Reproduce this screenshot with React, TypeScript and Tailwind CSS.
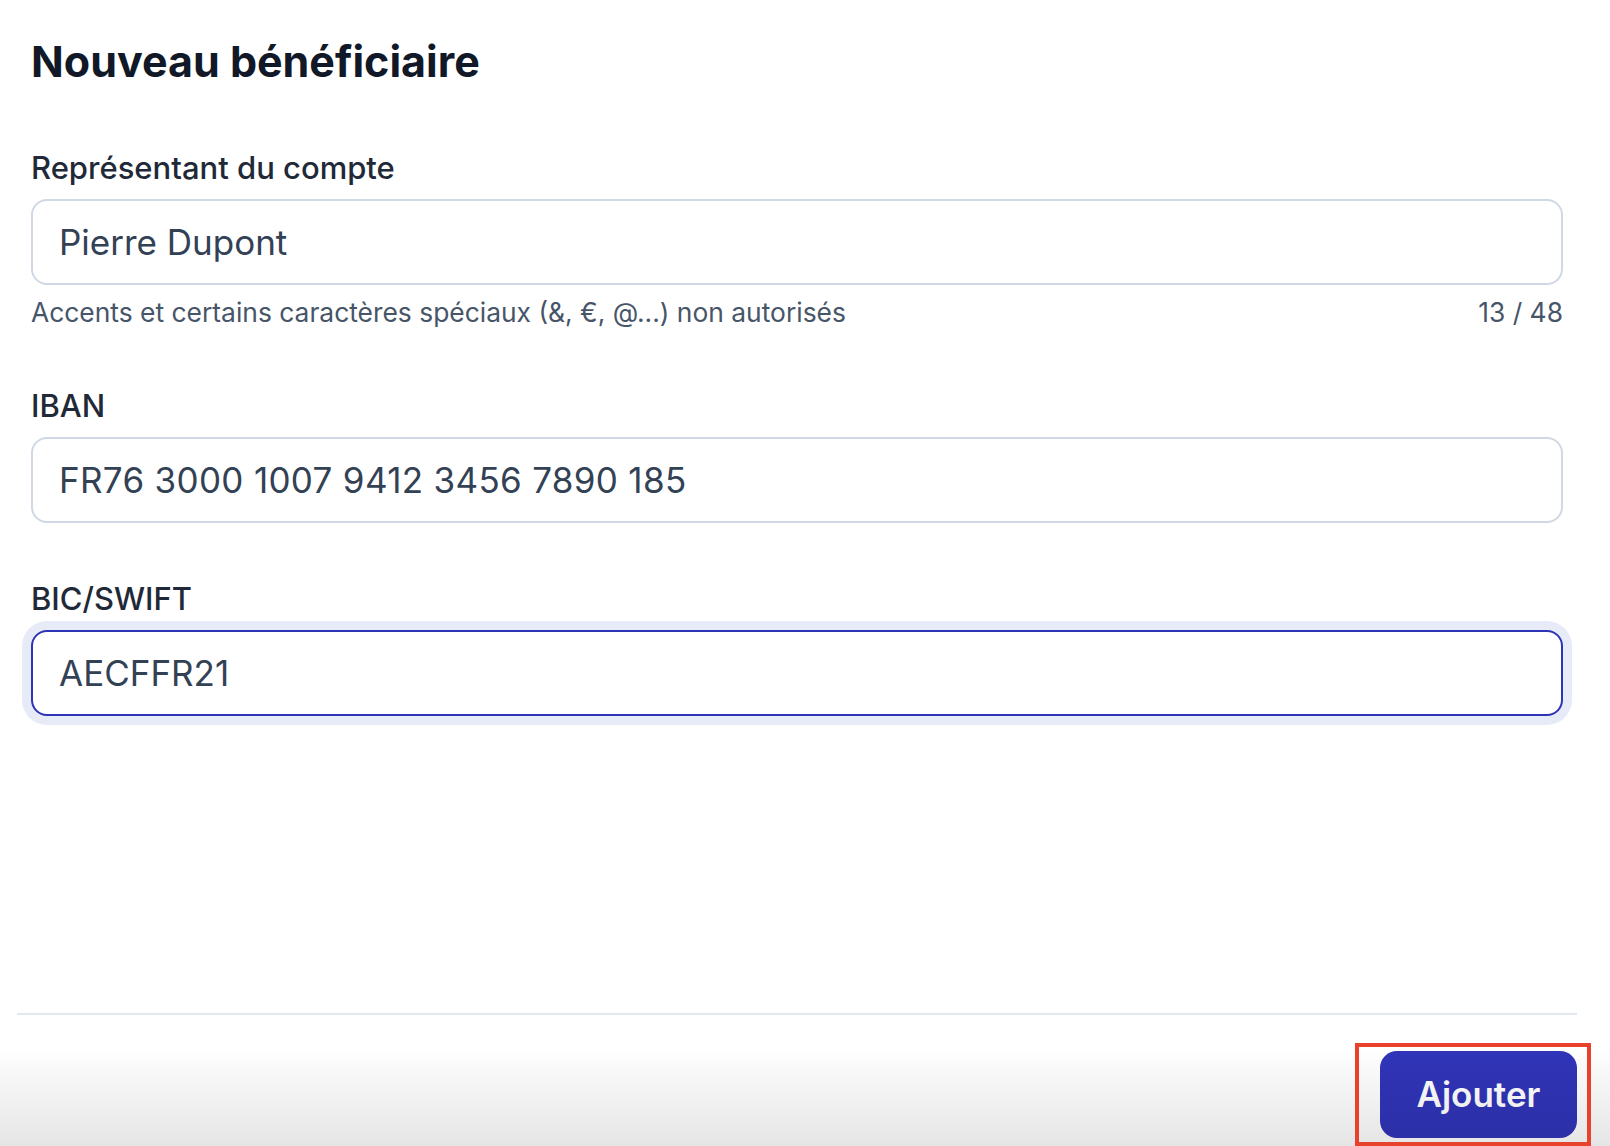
import React from "react";

function Field({
  label,
  value,
  focused = false,
  numeric = false,
}: {
  label: string;
  value: string;
  focused?: boolean;
  numeric?: boolean;
}) {
  return (
    <div className="flex flex-col">
      <label className="text-[31px] leading-[44px] font-medium text-[#1f2937]">{label}</label>
      <div className="mt-[9px]">
        <div
          className={
            focused
              ? "h-[86px] rounded-[16px] border-2 border-[#2f33b5] bg-white pl-[26px] flex items-center shadow-[0_0_0_9px_#e6ebf7]"
              : "h-[86px] rounded-[16px] border-2 border-[#cfd8e3] bg-white pl-[26px] flex items-center"
          }
        >
          <span className={numeric ? "text-[35px] text-[#334155] tracking-[0.32px]" : "text-[35px] text-[#334155]"}>
            {value}
          </span>
        </div>
      </div>
    </div>
  );
}

export default function App() {
  return (
    <div
      className="relative w-[1610px] h-[1146px] bg-white overflow-hidden"
      style={{ fontFamily: "Inter, 'Noto Sans', sans-serif" }}
    >
      <div className="flex flex-col h-full pl-[17px] pr-[33px]">
        <div className="flex-1 px-[14px]">
          <h1 className="pt-[35px] text-[43px] leading-[53px] font-bold text-[#111827]">
            Nouveau bénéficiaire
          </h1>

          <div className="mt-[58px]">
            <Field label="Représentant du compte" value="Pierre Dupont" />
            <div className="mt-[9px] flex justify-between text-[26.4px] leading-[36px] text-[#475569]">
              <span>Accents et certains caractères spéciaux (&amp;, €, @...) non autorisés</span>
              <span>13 / 48</span>
            </div>
          </div>

          <div className="mt-[54px]">
            <Field label="IBAN" value="FR76 3000 1007 9412 3456 7890 185" numeric />
          </div>

          <div className="mt-[54px]">
            <Field label="BIC/SWIFT" value="AECFFR21" focused />
          </div>
        </div>

        <div className="border-t-2 border-[#e2e8f0] pt-[36px] pb-[8px] flex justify-end">
          <button className="w-[197px] h-[87px] rounded-[17px] bg-[#3034b8] text-white text-[35px] font-semibold flex items-center justify-center">
            Ajouter
          </button>
        </div>
      </div>

      <div className="pointer-events-none absolute left-0 right-0 bottom-0 h-[100px] bg-gradient-to-b from-[#ffffff00] to-[#0000001a]" />

      <div className="pointer-events-none absolute left-[1355px] top-[1043px] w-[236px] h-[103px] border-4 border-[#e8412c]" />
    </div>
  );
}
